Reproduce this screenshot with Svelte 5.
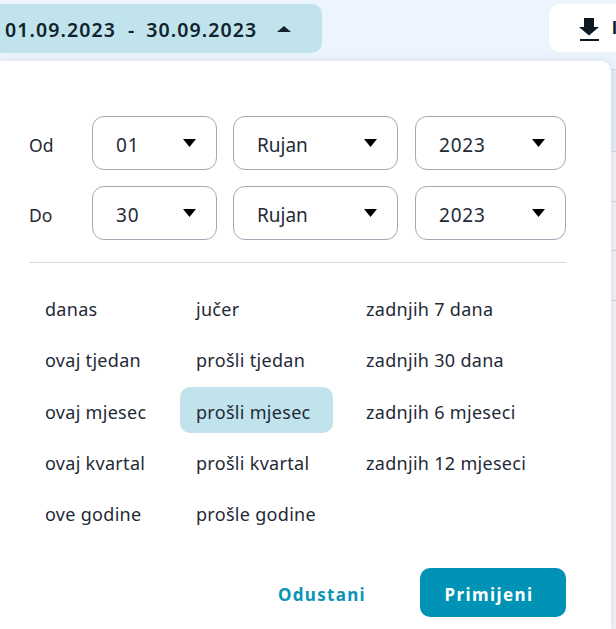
<script>
  const selects = [
    { label: 'Od', values: ['01', 'Rujan', '2023'] },
    { label: 'Do', values: ['30', 'Rujan', '2023'] }
  ];
  const presets = [
    ['danas', 'ovaj tjedan', 'ovaj mjesec', 'ovaj kvartal', 'ove godine'],
    ['jučer', 'prošli tjedan', 'prošli mjesec', 'prošli kvartal', 'prošle godine'],
    ['zadnjih 7 dana', 'zadnjih 30 dana', 'zadnjih 6 mjeseci', 'zadnjih 12 mjeseci']
  ];
  const widths = ['col-a', 'col-b', 'col-c'];
</script>

<div class="page">
  <div class="backdrop">
    <div class="thead"></div>
    <div class="row"></div>
    <div class="row"></div>
    <div class="row"></div>
    <div class="row"></div>
  </div>

  <header class="top">
    <button class="range">
      <span>01.09.2023</span><span class="dash">-</span><span>30.09.2023</span>
      <svg class="up" width="14" height="6" viewBox="0 0 14 6"><path d="M7 0 L14 6 H0 Z" fill="#10222c" /></svg>
    </button>
    <button class="export">
      <svg width="20" height="23" viewBox="0 0 20 23"><path d="M5 0h10v9h5l-10 8.5L0 9h5z M1 21h19v2H1z" fill="#0b1a24" /></svg>
      <span>I</span>
    </button>
  </header>

  <section class="panel">
    {#each selects as row}
      <div class="date-row">
        <span class="label">{row.label}</span>
        {#each row.values as v, i}
          <div class="select s{i}">
            <span>{v}</span>
            <svg width="13" height="8" viewBox="0 0 13 8"><path d="M0 0H13L6.5 8Z" fill="#000" /></svg>
          </div>
        {/each}
      </div>
    {/each}
    <hr />
    <div class="presets">
      {#each presets as col, c}
        <div class="col {widths[c]}">
          {#each col as p}
            <div class="preset" class:active={p === 'prošli mjesec'}>{p}</div>
          {/each}
        </div>
      {/each}
    </div>
    <div class="actions">
      <button class="cancel">Odustani</button>
      <button class="apply">Primijeni</button>
    </div>
  </section>
</div>

<style>
  :global(body) { margin: 0; }
  .page {
    position: relative;
    width: 616px;
    height: 629px;
    overflow: hidden;
    background: #ecf4fd;
    font-family: "Noto Sans", sans-serif;
    color: #1f2a37;
  }
  button { font-family: inherit; border: 0; padding: 0; }
  .backdrop {
    position: absolute;
    top: 69px;
    left: 0;
    right: 0;
    height: 560px;
    background: #f2f2f5;
    border-top: 1px solid #d4d9e2;
  }
  .thead { height: 81px; background: #e5ecf6; }
  .row { height: 49.5px; border-top: 1px solid #d3d6de; box-sizing: border-box; }
  .top {
    position: relative;
    display: flex;
    justify-content: space-between;
    padding-top: 4px;
    height: 57px;
    box-sizing: border-box;
  }
  .range {
    width: 322px;
    height: 49px;
    background: #c1e3ec;
    border-radius: 0 10px 10px 0;
    display: flex;
    align-items: center;
    padding: 2px 0 0 5px;
    box-sizing: border-box;
    font-size: 19.5px;
    font-weight: 600;
    letter-spacing: 1.1px;
    color: #10222c;
  }
  .dash { margin: 0 11px 0 12px; }
  .up { margin: -2px 0 0 20px; }
  .export {
    width: 80px;
    height: 48px;
    margin-right: -13px;
    background: #fff;
    border-radius: 10px;
    display: flex;
    align-items: center;
    gap: 13px;
    padding-left: 30px;
    box-sizing: border-box;
    font-size: 18px;
    font-weight: 600;
    font-family: "Liberation Sans", sans-serif;
    color: #10222c;
  }
  .export svg { margin-top: 2px; }
  .panel {
    position: relative;
    margin-top: 4px;
    width: 611px;
    height: 568px;
    background: #fff;
    border-radius: 0 10px 0 0;
    box-sizing: border-box;
    padding: 55px 0 0 29px;
    box-shadow: 0 0 8px rgba(70, 90, 130, 0.14);
  }
  .date-row {
    display: flex;
    align-items: center;
    height: 54px;
    margin-bottom: 16px;
  }
  .label { width: 63px; font-size: 17.5px; padding-top: 3px; }
  .select {
    height: 54px;
    box-sizing: border-box;
    border: 1px solid #a3a9b5;
    border-radius: 12px;
    display: flex;
    align-items: center;
    justify-content: space-between;
    padding: 0 20px 0 23px;
    font-size: 19px;
    margin-right: 16px;
  }
  .select span { padding-top: 4px; letter-spacing: 0.8px; }
  .s1 span { letter-spacing: 0; }
  .s0 { width: 125px; }
  .s1 { width: 165px; margin-right: 17px; }
  .s2 { width: 151px; margin-right: 0; }
  hr {
    width: 537px;
    margin: 22px 0 0 0;
    border: 0;
    border-top: 1px solid #d5dbe3;
  }
  .presets { display: flex; margin-top: 21px; }
  .col { display: flex; flex-direction: column; gap: 5.3px; }
  .col-a { width: 151px; }
  .col-b { width: 170px; }
  .preset {
    height: 46px;
    line-height: 50px;
    padding: 0 16px;
    border-radius: 10px;
    font-size: 18px;
    letter-spacing: 0.3px;
    white-space: nowrap;
  }
  .active { background: #c1e3ec; width: 153px; box-sizing: border-box; }
  .actions {
    position: absolute;
    top: 507px;
    left: 278px;
    display: flex;
    align-items: center;
  }
  .cancel {
    background: none;
    color: #0b93b5;
    font-size: 17px;
    font-weight: 700;
    letter-spacing: 1.3px;
    width: 142px;
    text-align: left;
    padding-top: 4px;
  }
  .apply {
    width: 146px;
    height: 49px;
    background: #0093b5;
    color: #fff;
    border-radius: 10px;
    font-size: 17px;
    font-weight: 700;
    letter-spacing: 1.4px;
    padding: 3px 8px 0 0;
  }
</style>
